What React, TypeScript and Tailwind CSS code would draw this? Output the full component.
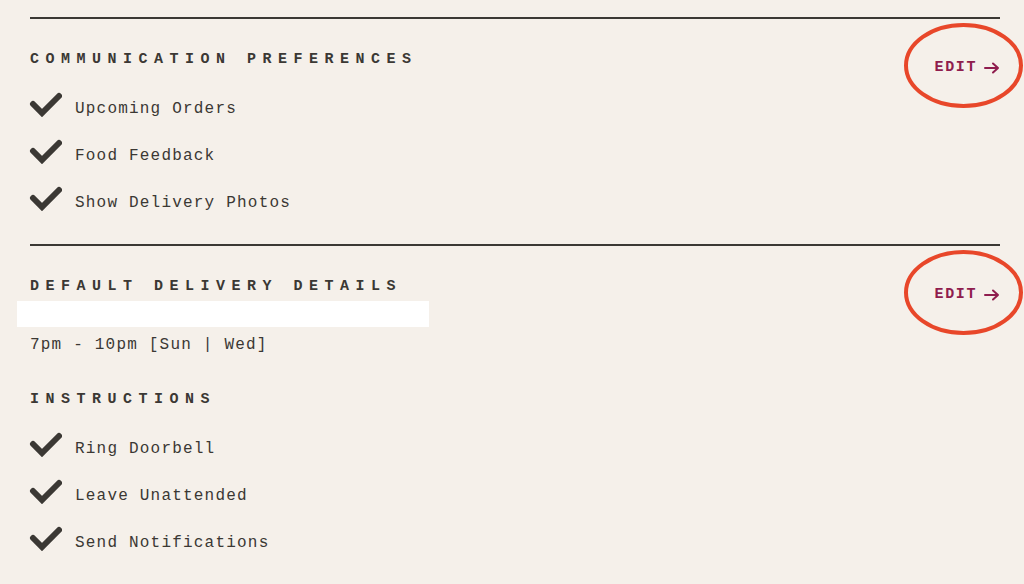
const comms = ["Upcoming Orders", "Food Feedback", "Show Delivery Photos"];
const instructions = ["Ring Doorbell", "Leave Unattended", "Send Notifications"];

function Check() {
  return (
    <svg width="34" height="26" viewBox="0 0 34 26" className="shrink-0 mb-[10px] -ml-[2px]">
      <polyline points="5,13 14,22 31,5" fill="none" stroke="#3b3834" strokeWidth="6" strokeLinecap="round" strokeLinejoin="miter" />
    </svg>
  );
}

function CheckList({ items }: { items: string[] }) {
  return (
    <ul className="mt-[15px]">
      {items.map((it) => (
        <li key={it} className="h-[47px] flex items-center gap-[13px]">
          <Check />
          <span className="text-[16px] tracking-[1.2px] text-[#3b3834]">{it}</span>
        </li>
      ))}
    </ul>
  );
}

function Heading({ children }: { children: string }) {
  return (
    <h2 className="text-[15px] leading-[20px] font-bold tracking-[6.5px] text-[#3b3834]">{children}</h2>
  );
}

function Edit() {
  return (
    <a className="relative mt-[39px] h-[20px] flex items-center gap-[7px] text-[15px] font-bold tracking-[1.6px] text-[#8f1d4e] whitespace-nowrap">
      EDIT
      <svg width="16" height="12" viewBox="0 0 16 12" className="shrink-0">
        <path d="M1 6h13M9 1.5 14 6l-5 4.5" fill="none" stroke="#8f1d4e" strokeWidth="2" strokeLinecap="round" strokeLinejoin="round" />
      </svg>
      <svg width="122" height="88" viewBox="0 0 122 88" className="absolute -left-[32px] -top-[36px] pointer-events-none">
        <ellipse cx="60.5" cy="43.5" rx="57.5" ry="40.5" fill="none" stroke="#e8472a" strokeWidth="4" />
      </svg>
    </a>
  );
}

export default function App() {
  return (
    <div className="min-h-screen bg-[#f5f0ea] pt-[17px] pl-[30px] pr-[24px] overflow-hidden" style={{ fontFamily: '"Liberation Mono", "Courier New", monospace' }}>
      {/* Communication preferences */}
      <section className="border-t-2 border-[#3b3834] flex justify-between pb-[18px]">
        <div className="pt-[31px]">
          <Heading>COMMUNICATION PREFERENCES</Heading>
          <CheckList items={comms} />
        </div>
        <Edit />
      </section>

      {/* Default delivery details */}
      <section className="border-t-2 border-[#3b3834] flex justify-between">
        <div className="pt-[31px]">
          <Heading>DEFAULT DELIVERY DETAILS</Heading>
          <div className="-ml-[13px] mt-[4px] w-[412px] h-[26px] bg-white" />
          <p className="mt-[8px] leading-[20px] text-[16px] tracking-[1.2px] text-[#3b3834]">7pm - 10pm [Sun | Wed]</p>
          <div className="mt-[35px]">
            <Heading>INSTRUCTIONS</Heading>
          </div>
          <CheckList items={instructions} />
        </div>
        <Edit />
      </section>
    </div>
  );
}
